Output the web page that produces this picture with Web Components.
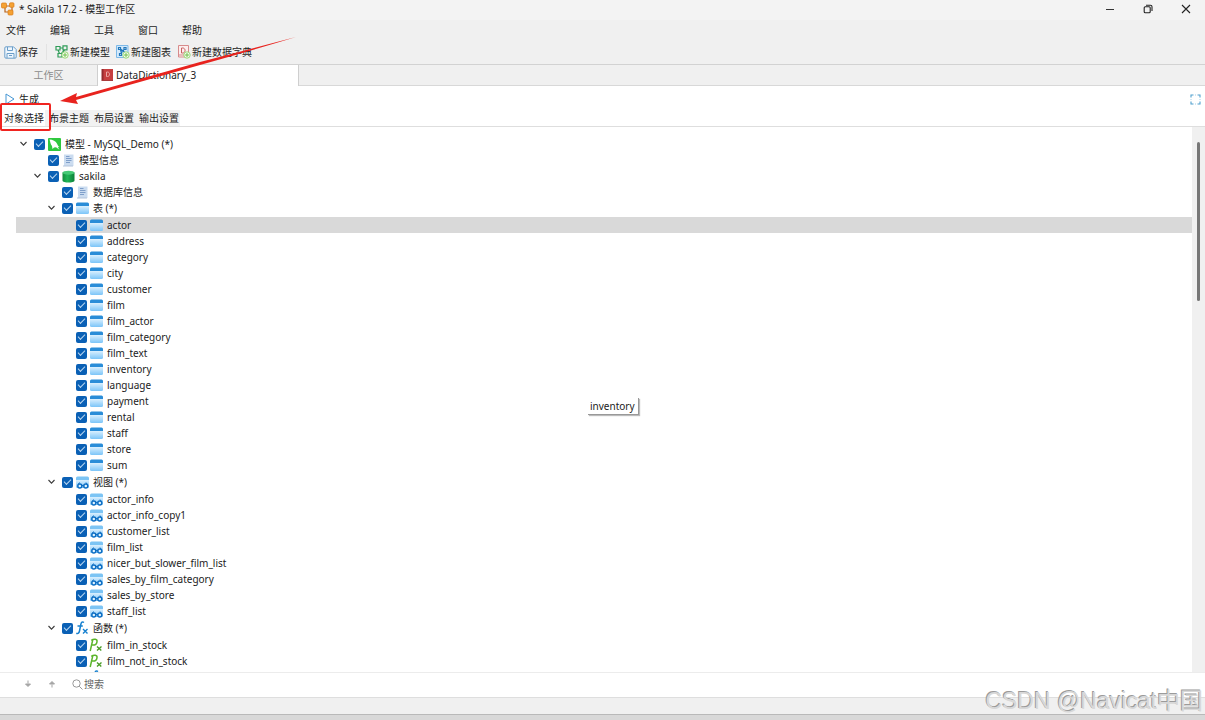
<!DOCTYPE html>
<html lang="zh-CN">
<head>
<meta charset="utf-8">
<title>Sakila 17.2 - 模型工作区</title>
<style>
html, body { height: 100%; margin: 0; }
body { font: 10px/16px "Noto Sans", "Noto Sans CJK SC", sans-serif; color: #1c1c1c; background: #f0f0f0; overflow: hidden; }
</style>
</head>
<body>
<model-workspace></model-workspace>
<script>
const svg = (w, h, body) => `<svg width="${w}" height="${h}" viewBox="0 0 ${w} ${h}" fill="none" aria-hidden="true">${body}</svg>`;
const tableBase = (id) => `<defs><linearGradient id="${id}" x1="0" y1="0" x2="0" y2="1"><stop stop-color="#e6f5ff"/><stop offset="1" stop-color="#7cc5f8"/></linearGradient></defs><path d="M0 3h13v7.500a1.500 1.500 0 0 1-1.500 1.500h-10a1.500 1.500 0 0 1-1.500-1.500z" fill="url(#${id})"/>`;
const tableHead = (c) => `<path d="M0 4V2A1.500 1.500 0 0 1 1.500 .5h10A1.500 1.500 0 0 1 13 2v2z" fill="${c}"/>`;
const plus = (x, y) => `<circle cx="${x}" cy="${y}" r="3.200" fill="#f4faf0" stroke="#8ed468" stroke-width=".9"/><path d="M${x - 2} ${y}h4M${x} ${y - 2}v4" stroke="#66bd3e" stroke-width=".9"/>`;
const ICONS = {
  model: svg(13, 13, `<rect width="13" height="13" rx="1" fill="#2fc83e"/><path d="M1.500 1.500C4.500 1.500 8 3 9.200 6c.6 1.500 1 2.300 2.300 3l-1.700.3 1.700 2.500-3.500-2.600-2 .3L4.500 11 4 8C2.300 6 2.500 4 1.500 1.500z" fill="#fff"/>`),
  info: svg(13, 13, `<path d="M2 .5h9.500v11.500H2z" fill="#cbdcf0"/><path d="M1 12h10" stroke="#b2c4dc"/><path d="M4 2.500h3.500M4 4.500h5.500M4 6.500h5.500M4 8.500h4" stroke="#7f9fca"/>`),
  database: svg(13, 13, `<defs><linearGradient id="d"><stop stop-color="#138a3c"/><stop offset=".4" stop-color="#20b657"/><stop offset="1" stop-color="#0c8138"/></linearGradient></defs><path d="M.5 2.500v8c0 2.700 12 2.700 12 0v-8z" fill="url(#d)"/><ellipse cx="6.500" cy="2.700" rx="6" ry="2" fill="#45c975"/>`),
  table: svg(13, 13, tableBase('t') + tableHead('#2a8dd8')),
  view: svg(13, 13, tableBase('v') + tableHead('#7cc4f4') + `<g fill="#dff3ff" stroke="#0f6fc4" stroke-width="1.500"><circle cx="3.800" cy="10" r="2"/><circle cx="9.800" cy="10" r="2"/></g><path d="M2.500 8l1-1.500M11 8l-1-1.500M5.700 9.500h2.200" stroke="#0f6fc4"/>`),
  func: svg(14, 14, `<path d="M9 1.500C7.300.300 6.300 1.300 5.900 3.200L4.500 10c-.4 2-1.400 3-3.200 2.200M2.500 5h5.300" stroke="#1680cf" stroke-width="1.500"/><path d="M8 8l4.500 4.500M12.500 8L8 12.500" stroke="#1680cf" stroke-width="1.400"/>`),
  proc: svg(14, 14, `<path d="M1.200 13L3.800 1.700M2.200 2.300C5 .500 8.500.800 8 3.800 7.500 6.600 5 7.300 3 7" stroke="#5cb52c" stroke-width="1.500"/><path d="M8 8.500l4.300 4M12.500 8.500L8 12.500" stroke="#4a9c26" stroke-width="1.400"/>`),
  save: svg(13, 13, `<path d="M.8 2a1.200 1.200 0 0 1 1.200-1.200h7.500l2.700 2.700V11a1.200 1.200 0 0 1-1.200 1.200H2A1.200 1.200 0 0 1 .8 11z" fill="#eef6fd" stroke="#6b9ec9"/><path d="M3.500 1v3.500h5V1M3 12V7.500h7V12M5 9.500h3" stroke="#6b9ec9"/>`),
  newModel: svg(14, 14, `<g stroke="#2f9c58" stroke-width="1.200"><path d="M1 1.500h4v3.500H1zM8 .8h4v4H8zM3 8.500h4V12H3zM5 3h3M3 5l1.500 3.500M9.500 5L6.500 8.500"/></g>` + plus(10, 10)),
  newDiagram: svg(14, 14, `<path d="M.5.500h11.500v12H.500z" fill="#d3e9fb" stroke="#7db9e8"/><g stroke="#2277ba" stroke-width="1.200"><path d="M2.500 2.500h2v2h-2zM8 2.500h2v2H8zM3.500 8.500h2v2h-2zM4.500 4.500l1 4M8 4.500l-3 4M4.500 4l4 3"/></g>` + plus(10, 10)),
  newDict: svg(14, 14, `<path d="M1.500.500h10v11.500H1.500z" fill="#fceeee" stroke="#d78b8b"/><path d="M1 10h10" stroke="#d78b8b"/><path d="M4.500 3v5h1.300c3 0 3-5 0-5z" stroke="#c96060"/>` + plus(10, 10)),
  dict: svg(12, 14, `<path d="M1 1h11v12H1z" fill="#c63f40"/><path d="M.5 1h2v12h-2z" fill="#922b2f"/><path d="M1 12.500h11" stroke="#a83a3c"/><path d="M5.500 4v4.500h1c2.700 0 2.700-4.500 0-4.500z" stroke="#eca9a6"/>`),
  play: svg(10, 12, `<path d="M1 1l8 5-8 5z" stroke="#4596d4"/>`),
  chevron: svg(9, 6, `<path d="M1.500 1l3 3.200 3-3.200" stroke="#3c3c3c" stroke-width="1.100"/>`),
  app: svg(14, 14, `<path d="M4 4h7M4 4v6h4M11 4v6" stroke="#b9641b" stroke-width="1.200"/><g fill="#f5a234" stroke="#d87b1b" stroke-width=".7"><rect x=".5" y="1" width="5" height="5" rx="1"/><rect x="8.500" y=".8" width="4.500" height="4.500" rx="1"/><rect x="7" y="8" width="5" height="5" rx="1"/></g>`),
  expand: svg(11, 11, `<path d="M1 3.500V1h2.500M7.500 1H10v2.500M10 7.500V10H7.500M3.500 10H1V7.500" stroke="#51a0ce" stroke-width="1.100"/><path d="M5 1h1M5 10h1M1 5v1M10 5v1" stroke="#a6d0e9"/>`),
  min: svg(10, 10, `<path d="M1 5.500h8" stroke="#333"/>`),
  restore: svg(10, 10, `<rect x="1.200" y="2.800" width="6" height="6" rx="1" stroke="#222" stroke-width="1.100"/><path d="M3 1.300h4.500a1.500 1.500 0 0 1 1.500 1.500V7" stroke="#222" stroke-width="1.100"/>`),
  close: svg(10, 10, `<path d="M1 1l8 8M9 1L1 9" stroke="#222" stroke-width="1.100"/>`),
  down: svg(8, 8, `<path d="M4 .500v3M1.500 4h5L4 6.500z" fill="#a5a5a5" stroke="#a5a5a5"/>`),
  up: svg(8, 8, `<path d="M4 7.500v-3M1.500 4h5L4 1.500z" fill="#a5a5a5" stroke="#a5a5a5"/>`),
  search: svg(11, 11, `<circle cx="4.500" cy="4.500" r="3.700" stroke="#999"/><path d="M7.200 7.200l3.300 3.300" stroke="#999"/>`)
};

const BASE = `*{box-sizing:border-box}svg{display:block;flex:none}
button,input{font:inherit;color:inherit;border:0;background:none;padding:0;margin:0}`;

class Base extends HTMLElement {
  constructor() { super(); this.attachShadow({ mode: 'open' }); }
  connectedCallback() { this.shadowRoot.innerHTML = `<style>${BASE}${this.css()}</style>${this.html()}`; }
  a(n) { return this.getAttribute(n) || ''; }
}

customElements.define('icon-button', class extends Base {
  css() { return `:host{display:block}button{display:flex;align-items:center;gap:var(--gap,1px);white-space:nowrap}`; }
  html() { return `<button type="button" aria-label="${this.a('name')}">${ICONS[this.a('icon')] || ''}<slot></slot></button>`; }
});

customElements.define('title-bar', class extends Base {
  css() { return `:host{display:flex;align-items:center;height:20px;padding:0 14px 2px 1px;gap:4px;background:#f3f3f3}
    .name{flex:1}.controls{display:flex;gap:28px}`; }
  html() { return `${ICONS.app}<span class="name">* Sakila 17.2 - 模型工作区</span>
    <div class="controls"><icon-button icon="min" name="最小化"></icon-button><icon-button icon="restore" name="还原"></icon-button><icon-button icon="close" name="关闭"></icon-button></div>`; }
});

customElements.define('menu-bar', class extends Base {
  css() { return `:host{display:block}nav{display:flex;gap:24px;padding:2px 6px;height:20px}`; }
  html() { return `<nav>${['文件', '编辑', '工具', '窗口', '帮助'].map(t => `<button type="button">${t}</button>`).join('')}</nav>`; }
});

customElements.define('tool-bar', class extends Base {
  css() { return `:host{display:flex;align-items:center;height:24px;padding:0 4px;gap:6px}
    .sep{width:1px;height:16px;margin:0 2px;background:#e2e2e2}`; }
  html() { return `<icon-button icon="save" name="保存">保存</icon-button><span class="sep"></span>
    <icon-button icon="newModel" name="新建模型">新建模型</icon-button>
    <icon-button icon="newDiagram" name="新建图表">新建图表</icon-button>
    <icon-button icon="newDict" name="新建数据字典">新建数据字典</icon-button>`; }
});

customElements.define('document-tabs', class extends Base {
  css() { return `:host{display:flex;height:22px;border-top:1px solid #d2d2d2;border-bottom:1px solid #d8d8d8}
    button{height:20px}
    .home{width:97px;color:#8b8b8b}
    .doc{display:flex;align-items:center;gap:3px;width:202px;height:21px;padding:0 3px 1px;background:#fff;border:solid #cfcfcf;border-width:0 1px}`; }
  html() { return `<button type="button" class="home">工作区</button><button type="button" class="doc">${ICONS.dict}DataDictionary_3</button>`; }
});

customElements.define('section-tabs', class extends Base {
  css() { return `:host{display:block;border-bottom:1px solid #dedede}
    nav{display:flex;width:max-content;height:16px;background:#f2f2f2}
    button{width:45px;text-align:left;padding-left:4px;white-space:nowrap}
    .on{background:#fff}`; }
  html() { return `<nav>${['对象选择', '布景主题', '布局设置', '输出设置'].map((t, i) => `<button type="button" class="${i ? '' : 'on'}">${t}</button>`).join('')}</nav>`; }
});

customElements.define('tree-item', class extends Base {
  css() { return `:host{display:block}
    .row{display:flex;align-items:center;height:16px;padding-left:calc(3px + var(--level,0) * 14px);gap:6px}
    .row.selected{background:#d9d9d9}
    .twist{display:flex;align-items:center;justify-content:center;width:9px;height:16px}
    label{display:flex;align-items:center;gap:2px;white-space:nowrap}
    .icon{width:14px;display:flex;justify-content:center;margin-right:2px}
    input{appearance:none;width:11px;height:11px;border-radius:2px;background:#0a60b5;display:grid;place-items:center}
    input::after{content:"";width:6px;height:3px;border:solid #b9d6f0;border-width:0 0 1px 1px;transform:rotate(-45deg);margin-bottom:2px}
    :host([leaves]) .kids{padding:1px 0}`; }
  html() {
    const open = this.hasAttribute('open');
    const label = this.a('label');
    return `<div class="row ${this.hasAttribute('selected') ? 'selected' : ''}" style="--level:${this.a('level')}">
      ${open ? `<button type="button" class="twist" aria-label="折叠">${ICONS.chevron}</button>` : '<span class="twist"></span>'}
      <label><input type="checkbox" checked><span class="icon">${ICONS[this.a('icon')]}</span><span>${label}</span></label></div>
      <div class="kids"><slot></slot></div>`;
  }
});

customElements.define('object-tree', class extends Base {
  css() { return `:host{display:flex;flex:1;min-height:0;background:#fff}
    .list{flex:1;min-width:0;overflow:hidden;padding-top:9px;margin-left:16px}
    .bar{width:13px;background:#f0f0f0;padding:15px 5px 0 5px}
    .thumb{height:30%;border-radius:2px;background:#777}`; }
  html() {
    const leaves = (icon, names) => names.map(n => `<tree-item level="3" icon="${icon}" label="${n}"${n === 'actor' ? ' selected' : ''}></tree-item>`).join('');
    return `<div class="list">
      <tree-item open level="0" icon="model" label="模型 - MySQL_Demo (*)">
        <tree-item level="1" icon="info" label="模型信息"></tree-item>
        <tree-item open level="1" icon="database" label="sakila">
          <tree-item level="2" icon="info" label="数据库信息"></tree-item>
          <tree-item open leaves level="2" icon="table" label="表 (*)">${leaves('table', ['actor', 'address', 'category', 'city', 'customer', 'film', 'film_actor', 'film_category', 'film_text', 'inventory', 'language', 'payment', 'rental', 'staff', 'store', 'sum'])}</tree-item>
          <tree-item open leaves level="2" icon="view" label="视图 (*)">${leaves('view', ['actor_info', 'actor_info_copy1', 'customer_list', 'film_list', 'nicer_but_slower_film_list', 'sales_by_film_category', 'sales_by_store', 'staff_list'])}</tree-item>
          <tree-item open leaves level="2" icon="func" label="函数 (*)">${leaves('proc', ['film_in_stock', 'film_not_in_stock'])}${leaves('func', [''])}</tree-item>
        </tree-item>
      </tree-item></div><div class="bar"><div class="thumb"></div></div>`;
  }
});

customElements.define('search-bar', class extends Base {
  css() { return `:host{display:flex;align-items:center;height:25px;padding:0 24px 2px 24px;gap:16px;background:#fff;border-top:1px solid #ececec}
    label{display:flex;align-items:center;gap:1px;flex:1}input{flex:1;outline:0;height:16px}input::placeholder{color:#666;opacity:1}
    icon-button{width:8px}`; }
  html() { return `<icon-button icon="down" name="下一个"></icon-button><icon-button icon="up" name="上一个"></icon-button>
    <label>${ICONS.search}<input type="text" placeholder="搜索" aria-label="搜索"></label>`; }
});

customElements.define('model-workspace', class extends Base {
  css() { return `:host{display:flex;flex-direction:column;height:100vh;position:relative;overflow:hidden}
    .generate{display:flex;align-items:center;justify-content:space-between;height:24px;padding:2px 4px 0 5px;background:#fff}
    .generate icon-button{--gap:4px}
    section-tabs{background:#fff}
    footer{height:17px;border-top:1px solid #dedede;background:#f0f0f0}
    .edge{height:6px;border-top:1px solid #b9b9b9;background:#d8d8d8}
    .tip{position:absolute;left:588px;top:398px;padding:0 3px 0 2px;background:#fff;border:solid #999;border-width:0 1px 1px 0;box-shadow:1px 1px 1px #bbb}
    .mark{position:absolute;left:0;top:0;pointer-events:none}
    .box{position:absolute;left:0;top:103px;width:51px;height:28px;border:2px solid #f02420;border-radius:2px;pointer-events:none}
    .water{position:absolute;right:2px;bottom:3px;font:23px/32px "Liberation Sans","Noto Sans CJK SC",sans-serif;color:#d8d8d8;text-shadow:-1px -1px 0 #9b9b9b;white-space:nowrap}`; }
  html() { return `<title-bar></title-bar><menu-bar></menu-bar><tool-bar></tool-bar><document-tabs></document-tabs>
    <div class="generate"><icon-button icon="play" name="生成">生成</icon-button><icon-button icon="expand" name="全屏"></icon-button></div>
    <section-tabs></section-tabs><object-tree></object-tree><search-bar></search-bar><footer></footer><div class="edge"></div>
    <div class="tip" role="tooltip">inventory</div>
    <svg class="mark" width="300" height="110" aria-hidden="true"><path d="M296 37Q250 49 200 62L76 97l1-4-17 8 18 3-2-4L200 65Q250 51 296 37z" fill="#e8231e"/></svg>
    <div class="box"></div><div class="water">CSDN @Navicat中国</div>`; }
});
</script>
</body>
</html>
